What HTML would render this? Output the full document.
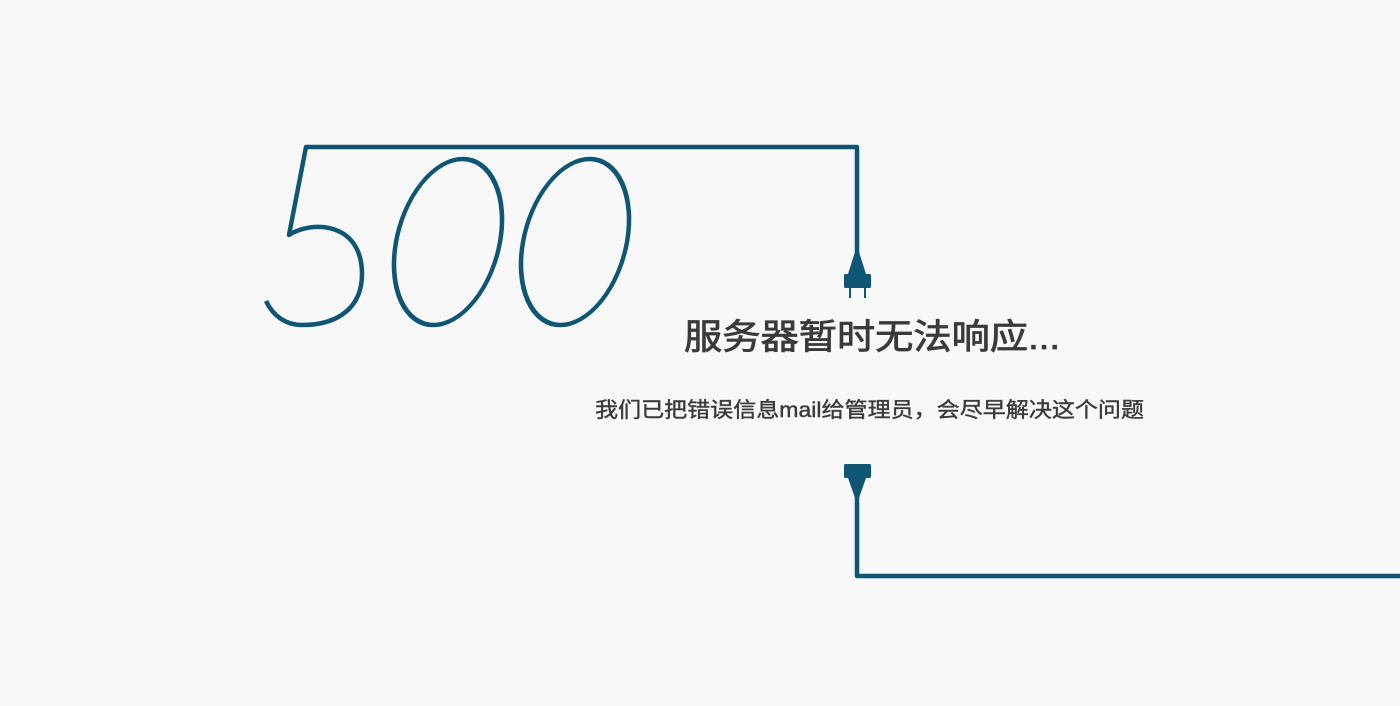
<!DOCTYPE html>
<html><head><meta charset="utf-8"><style>
html,body{margin:0;padding:0;background:#f8f8f8;width:1400px;height:706px;overflow:hidden}
svg{display:block}
text{font-family:"Liberation Sans","Noto Sans CJK SC",sans-serif;fill:#3a3a3a;stroke:#3a3a3a}
</style></head><body>
<svg width="1400" height="706" viewBox="0 0 1400 706">
<g fill="none" stroke="#0e5673" stroke-width="4.5" stroke-linejoin="round">
<path d="M857,256 L857,147 L306,147 L289,235 C312,220 362,222 362,274 C362,306 340,325 302,325 C286,325 273,316 266,301"/>
<ellipse cx="0" cy="0" rx="52" ry="83" transform="translate(448 242) skewX(-10)"/>
<ellipse cx="0" cy="0" rx="52" ry="83" transform="translate(575 242) skewX(-10)"/>
<path d="M857,495 L857,576 L1400,576"/>
</g>
<g fill="#0e5673">
<path d="M855,252 L859,252 L866,274 L848,274 Z"/>
<rect x="844" y="274" width="27" height="14" rx="1.5"/>
<rect x="849" y="287" width="2" height="11"/>
<rect x="864" y="287" width="2" height="11"/>
<rect x="844" y="464" width="27" height="14" rx="1.5"/>
<path d="M848,478 L866,478 L859,498 L855,498 Z"/>
</g>
<text x="684" y="349" font-size="35" stroke-width="0.8" textLength="376" lengthAdjust="spacingAndGlyphs">服务器暂时无法响应...</text>
<text x="595" y="417" font-size="21" stroke-width="0.4" textLength="549" lengthAdjust="spacingAndGlyphs">我们已把错误信息mail给管理员，会尽早解决这个问题</text>
</svg>
</body></html>
